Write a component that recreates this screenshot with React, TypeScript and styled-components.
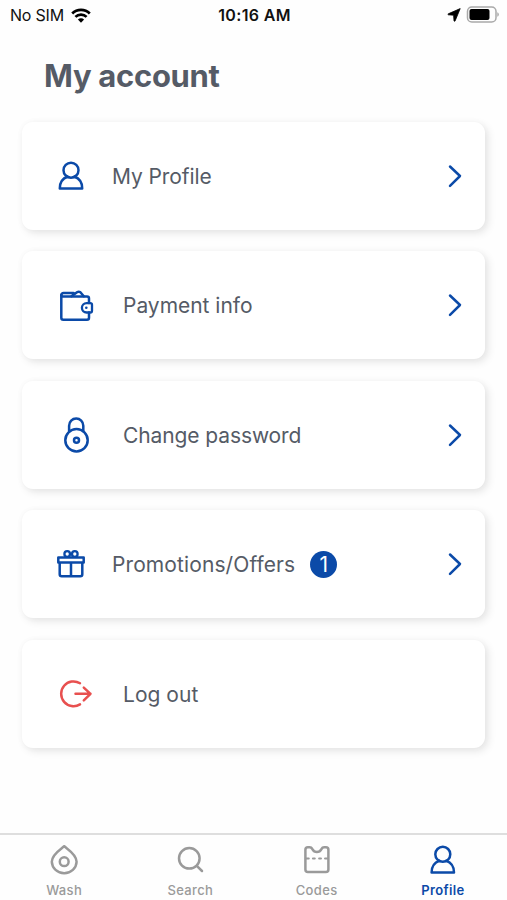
import React from "react";
import styled, { createGlobalStyle } from "styled-components";

const BLUE = "#0b4aa8";
const SLATE = "#555b66";
const GREY = "#9a9a9a";

const GlobalStyle = createGlobalStyle`
  * { box-sizing: border-box; }
  body { margin: 0; background: #fefefe; font-family: Inter, sans-serif; }
`;

const Screen = styled.div`
  width: 507px;
  height: 900px;
  display: flex;
  flex-direction: column;
  background: #fefefe;
  overflow: hidden;
`;

const StatusBar = styled.header`
  height: 30px;
  flex: none;
  display: grid;
  grid-template-columns: 1fr auto 1fr;
  align-items: center;
  padding: 0 8px 0 10px;
  color: #111;
  font-size: 16px;
  line-height: 30px;
`;

const Carrier = styled.div`
  display: flex;
  align-items: center;
  gap: 7px;
  letter-spacing: -0.2px;
`;

const Clock = styled.div`
  font-weight: 600;
  letter-spacing: 0.35px;
`;

const Indicators = styled.div`
  display: flex;
  align-items: center;
  justify-content: flex-end;
  gap: 5px;
`;

const Title = styled.h1`
  margin: 26px 0 0 44px;
  height: 40px;
  line-height: 40px;
  font-size: 31px;
  font-weight: 700;
  letter-spacing: -0.3px;
  color: ${SLATE};
`;

const Menu = styled.main`
  flex: 1;
  display: flex;
  flex-direction: column;
  gap: 21.4px;
  padding: 26px 22px 0;
`;

const Card = styled.button<{ $wide?: boolean }>`
  width: 463px;
  height: 108px;
  flex: none;
  display: flex;
  align-items: center;
  padding: 0 23px 0 ${(p) => (p.$wide ? 36 : 31)}px;
  border: 0;
  border-radius: 11px;
  background: #fff;
  box-shadow: 3px 3px 8px rgba(0, 0, 0, 0.1), 0 0 8px rgba(0, 0, 0, 0.025);
  font-family: inherit;
  text-align: left;
`;

const IconSlot = styled.span<{ $wide?: boolean }>`
  width: ${(p) => (p.$wide ? 65 : 59)}px;
  height: 36px;
  flex: none;
`;

const Label = styled.span<{ $spacing: number }>`
  padding-top: 2px;
  color: ${SLATE};
  font-size: 21px;
  line-height: 30px;
  letter-spacing: ${(p) => p.$spacing}px;
  white-space: nowrap;
`;

const Badge = styled.span`
  width: 27px;
  height: 27px;
  margin-left: 15px;
  border-radius: 50%;
  background: ${BLUE};
  color: #fff;
  font-size: 21px;
  line-height: 27px;
  text-align: center;
`;

const Chevron = styled.svg`
  margin-left: auto;
  flex: none;
`;

const TabBar = styled.nav`
  height: 67px;
  flex: none;
  display: grid;
  grid-template-columns: repeat(4, 1fr);
  border-top: 2px solid #dedede;
  padding: 10px 1px 0;
`;

const Tab = styled.a<{ $active?: boolean }>`
  display: flex;
  flex-direction: column;
  align-items: center;
  color: ${(p) => (p.$active ? BLUE : GREY)};
  font-size: 13px;
  font-weight: ${(p) => (p.$active ? 600 : 500)};
  letter-spacing: 0.35px;
  line-height: 18px;
  gap: 6px;
`;

const Icon = styled.svg`
  display: block;
  fill: none;
  stroke: currentColor;
  stroke-width: 2.5;
  stroke-linecap: round;
  stroke-linejoin: round;
`;

const BlueIcon = styled(Icon)`
  color: ${BLUE};
`;

const RedIcon = styled(Icon)`
  color: #e8504f;
`;

const personShape = (
  <>
    <circle cx="18" cy="12.2" r="7.5" />
    <path d="M14.6 18.800C9.700 20.400 6.800 24.800 6.800 30.500h22.400C29.200 24.800 26.300 20.400 21.400 18.800" />
  </>
);

const PersonIcon = () => (
  <BlueIcon width="36" height="36" viewBox="0 0 36 36">{personShape}</BlueIcon>
);

const WalletIcon = () => (
  <BlueIcon width="36" height="36" viewBox="0 0 36 36">
    <path d="M31 16v-4.400a2 2 0 0 0-2-2H5.300A2 2 0 0 1 3.300 8v22.700a2 2 0 0 0 2 2H29a2 2 0 0 0 2-2V25.500" />
    <path d="M3.300 8.300a2.200 2.200 0 0 1 2.200-2.200H15.500M13.500 9.200l5.500-3.900q1.800-1.200 3.400 0l3.400 3.900" />
    <path d="M32.300 16.100h-3.700a4.700 4.700 0 0 0 0 9.400h3.700a1.700 1.700 0 0 0 1.700-1.700v-6a1.700 1.700 0 0 0-1.700-1.700z" strokeWidth="2.300" />
    <circle cx="28.300" cy="20.800" r="1.300" fill="currentColor" stroke="none" />
  </BlueIcon>
);

const LockIcon = () => (
  <BlueIcon width="36" height="36" viewBox="0 0 36 36">
    <circle cx="18.500" cy="23.300" r="11.200" />
    <circle cx="18.500" cy="23.300" r="2.500" />
    <path d="M11.100 14V8.700a7.100 7.100 0 0 1 14.200 0V14" />
  </BlueIcon>
);

const GiftIcon = () => (
  <BlueIcon width="36" height="36" viewBox="0 0 36 36">
    <path d="M5.300 11.400h25.400v5.200H5.300zM6.700 16.600v11.700a2 2 0 0 0 2 2h18.600a2 2 0 0 0 2-2V16.600M18 16.800v13.300" />
    <circle cx="14.200" cy="8" r="2.800" strokeWidth="2.300" />
    <circle cx="21.800" cy="8" r="2.800" strokeWidth="2.300" />
  </BlueIcon>
);

const LogoutIcon = () => (
  <RedIcon width="36" height="36" viewBox="0 0 36 36">
    <path d="M22 7.200A12.400 12.400 0 1 0 22 28.400M17.500 17.800H32.500M25.800 11.700l6.700 6.100-6.700 6.600" />
  </RedIcon>
);

const items = [
  { label: "My Profile", icon: <PersonIcon />, spacing: -0.1 },
  { label: "Payment info", icon: <WalletIcon />, wide: true, spacing: -0.02 },
  { label: "Change password", icon: <LockIcon />, wide: true, spacing: -0.1 },
  { label: "Promotions/Offers", icon: <GiftIcon />, badge: 1, spacing: 0.1 },
  { label: "Log out", icon: <LogoutIcon />, wide: true, last: true, spacing: 0.02 },
];

const tabs = [
  {
    label: "Wash",
    shape: (
      <>
        <path d="M15.200 1.200C11.700 4.400 2.800 9.200 2.800 16.800A12.400 11.700 0 0 0 15.200 28.200a12.400 11.700 0 0 0 12.400-11.400C27.600 9.200 18.700 4.400 15.200 1.200Z" />
        <circle cx="15.200" cy="16.700" r="4.400" />
      </>
    ),
  },
  {
    label: "Search",
    shape: (
      <>
        <circle cx="14.300" cy="13.300" r="10.300" />
        <path d="M21.800 20.800l5.200 5.200" />
      </>
    ),
  },
  {
    label: "Codes",
    shape: (
      <>
        <path d="M5.900 2.200h1.800q1.700 0 2.500 1.700c1.200 2.200 2.600 3.200 4.700 3.200s3.500-1 4.700-3.200q.8-1.700 2.500-1.700h1.800a2.500 2.500 0 0 1 2.500 2.500v19.900a2.500 2.500 0 0 1-2.500 2.500h-18a2.500 2.500 0 0 1-2.500-2.500V4.700a2.500 2.500 0 0 1 2.500-2.500Z" />
        <path d="M4 13.500h2.700M11 13.500h1.700M17.200 13.500h1.700M23.100 13.500h2.700" strokeWidth="2.200" />
      </>
    ),
  },
  { label: "Profile", active: true, shape: <g transform="translate(-3.200 -2.900)">{personShape}</g> },
];

export default function App() {
  return (
    <>
      <GlobalStyle />
      <Screen>
        <StatusBar>
          <Carrier>
            No SIM
            <svg width="20" height="15" viewBox="0 0 20 15" fill="none" stroke="#000" strokeWidth="2.700">
              <path d="M1.200 5.500a12.600 12.600 0 0 1 17.600 0M4.400 8.900a8 8 0 0 1 11.200 0" />
              <path d="M6.900 11.600a4.400 4.400 0 0 1 6.200 0L10 14.700z" fill="#000" stroke="none" />
            </svg>
          </Carrier>
          <Clock>10:16 AM</Clock>
          <Indicators>
            <svg width="14" height="14" viewBox="0 0 14 14">
              <path d="M13.200.6 1.300 5.800q-.9.600.1 1l5.200.4.400 5.600q.4 1 1.100.1z" fill="#000" stroke="#000" strokeWidth="0.800" strokeLinejoin="round" />
            </svg>
            <svg width="33" height="18" viewBox="0 0 33 18">
              <rect x="1.500" y="1" width="28.500" height="15" rx="4.300" fill="none" stroke="#a9a9a9" strokeWidth="1.500" />
              <rect x="3.500" y="3" width="20" height="11" rx="2" fill="#000" />
              <path d="M31.300 6.300q1.500.5 1.500 2.200T31.300 10.700z" fill="#a9a9a9" />
            </svg>
          </Indicators>
        </StatusBar>
        <Title>My account</Title>
        <Menu>
          {items.map((item) => (
            <Card key={item.label} $wide={item.wide}>
              <IconSlot $wide={item.wide}>{item.icon}</IconSlot>
              <Label $spacing={item.spacing}>{item.label}</Label>
              {item.badge && <Badge>{item.badge}</Badge>}
              {!item.last && (
                <Chevron width="16" height="24" viewBox="0 0 16 24" fill="none" stroke={BLUE} strokeWidth="2.500" strokeLinecap="round" strokeLinejoin="round">
                  <path d="M4 2.500 14 12l-10 9.800" />
                </Chevron>
              )}
            </Card>
          ))}
        </Menu>
        <TabBar>
          {tabs.map((tab) => (
            <Tab key={tab.label} $active={tab.active}>
              <Icon width="30" height="30" viewBox="0 0 30 30">{tab.shape}</Icon>
              {tab.label}
            </Tab>
          ))}
        </TabBar>
      </Screen>
    </>
  );
}
